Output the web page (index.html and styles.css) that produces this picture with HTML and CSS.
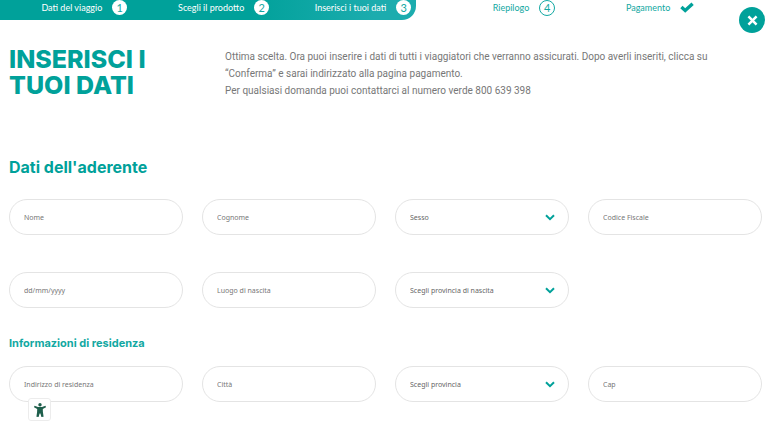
FILE: index.html
```html
<!DOCTYPE html>
<html lang="it">
<head>
  <meta charset="UTF-8" />
  <meta name="viewport" content="width=device-width, initial-scale=1.0" />
  <title>Inserisci i tuoi dati</title>
  <link rel="stylesheet" href="styles.css">
</head>
<body>
  <nav class="steps" aria-label="Avanzamento">
    <ol class="steps-done">
      <li>Dati del viaggio <span class="num">1</span></li>
      <li>Scegli il prodotto <span class="num">2</span></li>
      <li>Inserisci i tuoi dati <span class="num">3</span></li>
    </ol>
    <ol class="steps-todo" start="4">
      <li>Riepilogo <span class="num">4</span></li>
      <li>Pagamento
        <svg class="check" viewBox="0 0 14 10" aria-hidden="true"><path d="M1.4 4.6 5.2 8 12.6 1.3" /></svg>
      </li>
    </ol>
  </nav>

  <button type="button" class="btn-close" aria-label="Chiudi">
    <svg viewBox="0 0 10 10" aria-hidden="true"><path d="M1.3 1.3 8.7 8.7M8.7 1.3 1.3 8.7" /></svg>
  </button>

  <main>
    <header class="intro">
      <h1>INSERISCI I<br>TUOI DATI</h1>
      <p>Ottima scelta. Ora puoi inserire i dati di tutti i viaggiatori che verranno assicurati. Dopo averli inseriti, clicca su<br>
        “Conferma” e sarai indirizzato alla pagina pagamento.<br>
        Per qualsiasi domanda puoi contattarci al numero verde 800 639 398</p>
    </header>

    <form>
      <h2>Dati dell'aderente</h2>
      <div class="fields fields-anagrafica">
        <input type="text" name="nome" placeholder="Nome" aria-label="Nome" />
        <input type="text" name="cognome" placeholder="Cognome" aria-label="Cognome" />
        <div class="select">
          <select name="sesso" aria-label="Sesso">
            <option>Sesso</option>
            <option>M</option>
            <option>F</option>
          </select>
          <svg viewBox="0 0 10 7" aria-hidden="true"><path d="M1 1.3 5 5.2 9 1.3" /></svg>
        </div>
        <input type="text" name="cf" placeholder="Codice Fiscale" aria-label="Codice Fiscale" />
        <input type="text" name="data" placeholder="dd/mm/yyyy" aria-label="Data di nascita" />
        <input type="text" name="luogo" placeholder="Luogo di nascita" aria-label="Luogo di nascita" />
        <div class="select">
          <select name="provincia-nascita" aria-label="Provincia di nascita">
            <option>Scegli provincia di nascita</option>
          </select>
          <svg viewBox="0 0 10 7" aria-hidden="true"><path d="M1 1.3 5 5.2 9 1.3" /></svg>
        </div>
      </div>

      <h3>Informazioni di residenza</h3>
      <div class="fields">
        <input type="text" name="indirizzo" placeholder="Indirizzo di residenza" aria-label="Indirizzo di residenza" />
        <input type="text" name="citta" placeholder="Città" aria-label="Città" />
        <div class="select">
          <select name="provincia" aria-label="Provincia">
            <option>Scegli provincia</option>
          </select>
          <svg viewBox="0 0 10 7" aria-hidden="true"><path d="M1 1.3 5 5.2 9 1.3" /></svg>
        </div>
        <input type="text" name="cap" placeholder="Cap" aria-label="Cap" />
      </div>
    </form>
  </main>

  <button type="button" class="btn-access" aria-label="Accessibilità">
    <svg viewBox="0 0 12 14" aria-hidden="true">
      <circle cx="6" cy="1.7" r="1.7" />
      <path d="M.5 2.8 4 4h4l3.5-1.2.5 1.5-3.2 1.6.1 3.1.7 4.7-2.2.2L6.4 10.4h-.8l-1 3.5-2.2-.2.7-4.7.1-3.1L0 4.3z" />
    </svg>
  </button>
</body>
</html>
```
FILE: styles.css
```css
* {
  box-sizing: border-box;
  margin: 0;
  padding: 0;
}
body {
  background: #fff;
  color: #777;
  font-family: Roboto, "Noto Sans", sans-serif;
  font-size: 10px;
}

/* Barra dei passi */
.steps {
  display: flex;
  height: 20px;
  font-family: Lato, sans-serif;
  font-size: 9px;
  line-height: 15px;
}
.steps ol {
  display: flex;
  list-style: none;
}
.steps li {
  flex: 0 0 142px;
  display: flex;
  justify-content: flex-end;
  gap: 10px;
  white-space: nowrap;
}
.steps-done {
  width: 54.2%;
  justify-content: flex-end;
  padding-right: 5px;
  color: #fff;
  background: linear-gradient(90deg, #00a19a 60%, #1cacae 90%);
  border-radius: 0 0 14px 0;
}
.steps .steps-todo li {
  flex-basis: 139px;
}
.steps-todo {
  color: #12a8a2;
}
.num {
  width: 15px;
  height: 15px;
  border-radius: 50%;
  background: #fff;
  color: #12a8a2;
  font-size: 11px;
  text-align: center;
}
.steps-todo .num {
  width: 16px;
  height: 16px;
  border: 1px solid #12a8a2;
  line-height: 14px;
}
.check {
  width: 14px;
  height: 15px;
  fill: none;
  stroke: #00a19a;
  stroke-width: 3.4;
}

.btn-close {
  position: absolute;
  top: 7px;
  right: 3px;
  width: 26px;
  height: 26px;
  display: flex;
  align-items: center;
  justify-content: center;
  border: none;
  border-radius: 50%;
  background: #00a19a;
  cursor: pointer;
}
.btn-close svg {
  width: 11px;
  height: 11px;
  stroke: #fff;
  stroke-width: 2.3;
}

main {
  padding: 26px 6px 20px 9px;
}
.intro {
  display: flex;
  min-height: 110px;
}
h1, h2, h3 {
  font-family: Inter, sans-serif;
  color: #00a19a;
}
h1 {
  flex: 0 0 216px;
  font-size: 25px;
  font-weight: 800;
  line-height: 26px;
  white-space: nowrap;
}
.intro p {
  padding-top: 2px;
  line-height: 17px;
}

/* Modulo */
h2 {
  font-size: 16px;
  line-height: 22px;
  margin-bottom: 21px;
}
h3 {
  font-size: 11px;
  line-height: 16px;
  margin: 27px 0 15px;
  color: #12a8a2;
}
.fields {
  display: grid;
  grid-template-columns: repeat(4, 1fr);
  column-gap: 19px;
}
.fields-anagrafica {
  row-gap: 37px;
}
.fields input,
.fields select {
  width: 100%;
  height: 36px;
  padding: 0 14px;
  border: 1px solid #e4e4e4;
  border-radius: 18px;
  background: #fff;
  color: #666;
  font-family: "Noto Sans", sans-serif;
  font-size: 7px;
  appearance: none;
}
.fields input::placeholder {
  color: #777;
}
.select {
  position: relative;
}
.select svg {
  position: absolute;
  right: 14px;
  top: 15px;
  width: 10px;
  height: 7px;
  fill: none;
  stroke: #00a19a;
  stroke-width: 2;
  pointer-events: none;
}

.btn-access {
  position: fixed;
  left: 28px;
  bottom: 1px;
  width: 23px;
  height: 23px;
  display: flex;
  align-items: center;
  justify-content: center;
  border: 1px solid #ececec;
  border-radius: 3px;
  background: #fff;
  cursor: pointer;
}
.btn-access svg {
  width: 12px;
  height: 14px;
  fill: #1f5f4c;
}
```
